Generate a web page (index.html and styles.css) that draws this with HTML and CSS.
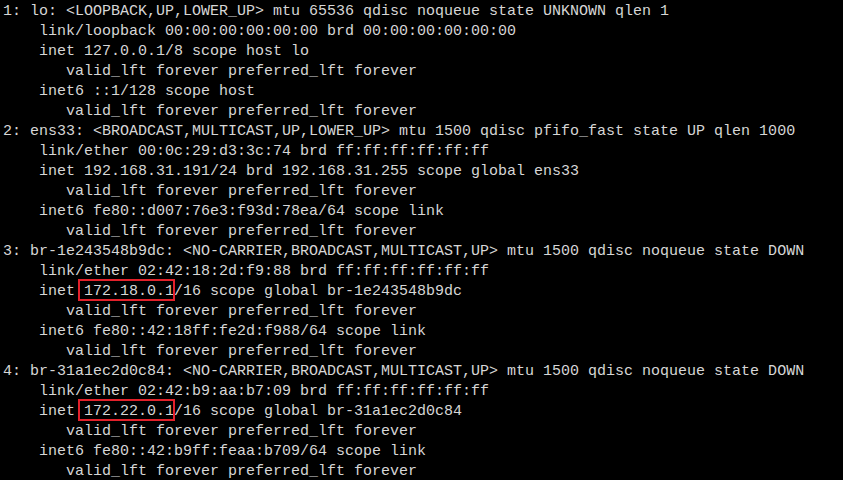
FILE: index.html
```html
<!DOCTYPE html>
<html>
<head>
<meta charset="utf-8">
<link rel="stylesheet" href="styles.css">
</head>
<body>
<pre class="term">1: lo: &lt;LOOPBACK,UP,LOWER_UP&gt; mtu 65536 qdisc noqueue state UNKNOWN qlen 1
    link/loopback 00:00:00:00:00:00 brd 00:00:00:00:00:00
    inet 127.0.0.1/8 scope host lo
       valid_lft forever preferred_lft forever
    inet6 ::1/128 scope host
       valid_lft forever preferred_lft forever
2: ens33: &lt;BROADCAST,MULTICAST,UP,LOWER_UP&gt; mtu 1500 qdisc pfifo_fast state UP qlen 1000
    link/ether 00:0c:29:d3:3c:74 brd ff:ff:ff:ff:ff:ff
    inet 192.168.31.191/24 brd 192.168.31.255 scope global ens33
       valid_lft forever preferred_lft forever
    inet6 fe80::d007:76e3:f93d:78ea/64 scope link
       valid_lft forever preferred_lft forever
3: br-1e243548b9dc: &lt;NO-CARRIER,BROADCAST,MULTICAST,UP&gt; mtu 1500 qdisc noqueue state DOWN
    link/ether 02:42:18:2d:f9:88 brd ff:ff:ff:ff:ff:ff
    inet <span class="mark">172.18.0.1</span>/16 scope global br-1e243548b9dc
       valid_lft forever preferred_lft forever
    inet6 fe80::42:18ff:fe2d:f988/64 scope link
       valid_lft forever preferred_lft forever
4: br-31a1ec2d0c84: &lt;NO-CARRIER,BROADCAST,MULTICAST,UP&gt; mtu 1500 qdisc noqueue state DOWN
    link/ether 02:42:b9:aa:b7:09 brd ff:ff:ff:ff:ff:ff
    inet <span class="mark">172.22.0.1</span>/16 scope global br-31a1ec2d0c84
       valid_lft forever preferred_lft forever
    inet6 fe80::42:b9ff:feaa:b709/64 scope link
       valid_lft forever preferred_lft forever</pre>
</body>
</html>
```
FILE: styles.css
```css
html, body {
  margin: 0;
  padding: 0;
  background: #000;
  height: 100%;
  overflow: hidden;
}
.term {
  margin: 0;
  padding: 2px 0 0 3px;
  color: #d6d6d6;
  font-family: "Liberation Mono", "DejaVu Sans Mono", monospace;
  font-size: 15px;
  line-height: 20px;
  white-space: pre;
}
.mark {
  position: relative;
  display: inline-block;
  line-height: 20px;
  height: 20px;
  vertical-align: top;
}
.mark::after {
  content: "";
  position: absolute;
  left: -6px;
  right: -1px;
  top: -3px;
  bottom: 1px;
  border: 2px solid #e3212b;
}
```
